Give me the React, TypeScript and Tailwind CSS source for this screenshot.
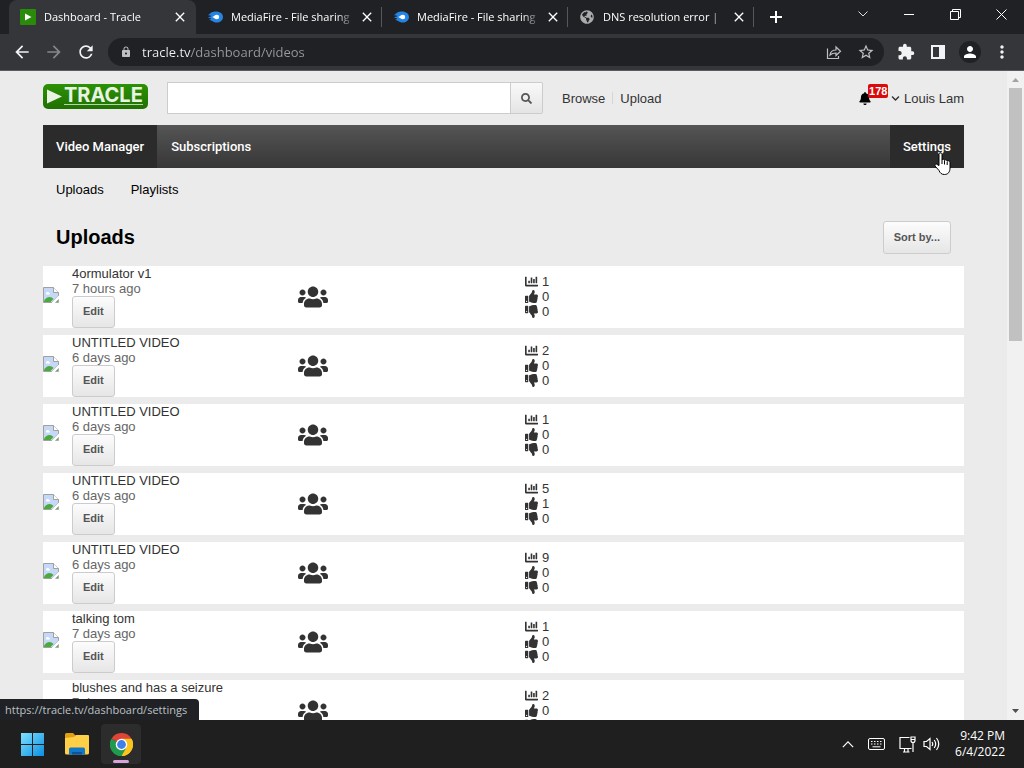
import React from 'react';
import { FaBell, FaChartBar, FaChevronDown, FaGlobeAmericas, FaSearch, FaThumbsDown, FaThumbsUp, FaUsers } from 'react-icons/fa';
import { MdArrowBack, MdArrowForward, MdClose, MdExtension, MdLock, MdMoreVert, MdPerson, MdRefresh, MdStarBorder } from 'react-icons/md';

const videos = [
  { title: '4ormulator v1', age: '7 hours ago', views: 1, likes: 0, dislikes: 0 },
  { title: 'UNTITLED VIDEO', age: '6 days ago', views: 2, likes: 0, dislikes: 0 },
  { title: 'UNTITLED VIDEO', age: '6 days ago', views: 1, likes: 0, dislikes: 0 },
  { title: 'UNTITLED VIDEO', age: '6 days ago', views: 5, likes: 1, dislikes: 0 },
  { title: 'UNTITLED VIDEO', age: '6 days ago', views: 9, likes: 0, dislikes: 0 },
  { title: 'talking tom', age: '7 days ago', views: 1, likes: 0, dislikes: 0 },
  { title: 'blushes and has a seizure', age: '7 days ago', views: 2, likes: 0, dislikes: 0 },
];

const tabs = [
  { title: 'Dashboard - Tracle', icon: 'tracle', active: true },
  { title: 'MediaFire - File sharing', icon: 'mediafire', active: false },
  { title: 'MediaFire - File sharing', icon: 'mediafire', active: false },
  { title: 'DNS resolution error |', icon: 'globe', active: false },
];

function Favicon({ name }: { name: string }) {
  if (name === 'tracle') {
    return (
      <svg viewBox="0 0 16 16" className="h-4 w-4 shrink-0">
        <rect width="16" height="16" rx="1" fill="#2a8a0a" />
        <path d="M5 4.500l6.500 3.500L5 11.500z" fill="#fff" />
      </svg>
    );
  }
  if (name === 'mediafire') {
    return (
      <svg viewBox="0 0 16 16" className="h-4 w-4 shrink-0">
        <path d="M0 6.500C2.500 6 3 3 8 2.500c4.500-.4 8 2 8 5.500s-3 5.500-6.500 5.500C6 13.500 5 11 2 11c1-.4 1.700-.8 2.300-1.400C3 9 1.500 9 .5 9.200 2 8 3.500 7.500 4.500 7 3 6.200 1.500 6.200 0 6.500z" fill="#2485e4" />
        <path d="M5 8c2 .1 2.500-2.200 5-2.200a2.200 2.200 0 0 1 0 4.400C7.700 10.200 7 8.500 5 8z" fill="#fff" />
      </svg>
    );
  }
  return <FaGlobeAmericas className="h-4 w-4 shrink-0 p-px text-[#a9abad]" />;
}

function TabStrip() {
  return (
    <div className="flex h-[34px] items-stretch bg-[#202124] pl-[9px] text-[11px] text-white">
      {tabs.map((tab, i) => (
        <div
          key={i}
          className={
            tab.active
              ? 'flex w-[187px] items-center rounded-t-lg bg-[#35363a] pr-2 pl-[11px]'
              : 'flex w-[186px] items-center pl-[11px]'
          }
        >
          <Favicon name={tab.icon} />
          <span className="ml-2 w-[124px] overflow-hidden mask-r-from-85% whitespace-nowrap">{tab.title}</span>
          <button aria-label="Close tab" className="ml-1 flex h-4 w-4 items-center justify-center">
            <MdClose className="h-4 w-4" />
          </button>
          {!tab.active && <span className="ml-auto h-5 w-px bg-[#55575b]" />}
        </div>
      ))}
      <button aria-label="New tab" className="flex w-11 items-center justify-center">
        <svg viewBox="0 0 12 12" className="h-3 w-3" stroke="#fff" strokeWidth="2">
          <path d="M6 0v12M0 6h12" />
        </svg>
      </button>
      <div className="ml-auto flex h-7">
        <button aria-label="Search tabs" className="flex w-[46px] items-center justify-center">
          <svg viewBox="0 0 10 6" className="h-1.5 w-2.5" fill="none" stroke="#ddd">
            <path d="M.5.5L5 5 9.500.5" />
          </svg>
        </button>
        <button aria-label="Minimize" className="flex w-[46px] items-center justify-center">
          <span className="h-px w-2.5 bg-white" />
        </button>
        <button aria-label="Restore" className="flex w-[46px] items-center justify-center">
          <svg viewBox="0 0 11 11" className="h-[11px] w-[11px]" fill="none" stroke="#fff">
            <path d="M.5 2.500h8v8h-8zM2.500 2.500v-2h8v8h-2" />
          </svg>
        </button>
        <button aria-label="Close" className="flex w-[46px] items-center justify-center">
          <svg viewBox="0 0 11 11" className="h-[11px] w-[11px]" stroke="#fff">
            <path d="M.5.5l10 10M10.500.5l-10 10" />
          </svg>
        </button>
      </div>
    </div>
  );
}

function Toolbar() {
  return (
    <div className="flex h-[37px] items-center border-b border-[#5a5b5e] bg-[#35363a] pr-1.5 pl-1.5 text-[#f1f3f4]">
      <button aria-label="Back" className="flex w-8 justify-center"><MdArrowBack className="h-5 w-5" /></button>
      <button aria-label="Forward" className="flex w-8 justify-center text-[#85878a]"><MdArrowForward className="h-5 w-5" /></button>
      <button aria-label="Reload" className="flex w-8 justify-center"><MdRefresh className="h-5 w-5" /></button>
      <div className="ml-1.5 flex h-7 flex-1 items-center rounded-full bg-[#202124] pr-2 pl-3 text-[#bdc1c6]">
        <MdLock className="h-3 w-3" />
        <input
          type="text"
          aria-label="Address"
          defaultValue="tracle.tv/dashboard/videos"
          className="ml-2.5 min-w-0 flex-1 bg-[linear-gradient(90deg,#f1f3f4_49px,#969ba1_49px)] bg-clip-text pt-px text-[13px] text-transparent outline-none"
        />
        <button aria-label="Share" className="flex w-8 justify-center">
          <svg viewBox="0 0 16 16" className="h-4 w-4" fill="none" stroke="currentColor" strokeWidth="1.200">
            <path d="M1.500 4.500v10h11V12M4 11c.5-3.500 2.500-5 6-5V3l4.500 4.300L10 11.500V9C7.500 9 5.700 9.500 4 11z" />
          </svg>
        </button>
        <button aria-label="Bookmark" className="-mr-1.5 flex w-8 justify-center"><MdStarBorder className="h-[18px] w-[18px]" /></button>
      </div>
      <button aria-label="Extensions" className="ml-1.5 flex w-8 justify-center"><MdExtension className="h-[18px] w-[18px]" /></button>
      <button aria-label="Side panel" className="flex w-8 justify-center">
        <svg viewBox="0 0 14 14" className="h-3.5 w-3.5" fill="currentColor">
          <path d="M0 0h14v14H0zM2 2v10h6V2z" fillRule="evenodd" />
        </svg>
      </button>
      <button aria-label="Profile" className="flex w-8 justify-center">
        <span className="flex h-[22px] w-[22px] items-center justify-center rounded-full bg-[#202124]">
          <MdPerson className="h-[18px] w-[18px] text-white" />
        </span>
      </button>
      <button aria-label="Menu" className="flex w-8 justify-center"><MdMoreVert className="h-5 w-5" /></button>
    </div>
  );
}

function SiteHeader() {
  return (
    <header className="flex items-center pt-[11px] pb-[11px]">
      <a href="#" className="mb-1 flex h-[25px] w-[105px] items-center rounded-[5px] bg-linear-to-b from-[#2c9205] to-[#217003] pl-1">
        <svg viewBox="0 0 15 15" className="h-[15px] w-[15px]" fill="#e8f3e4">
          <path d="M0 .5l15 7-15 7z" />
        </svg>
        <span className="ml-0.5 border-b border-[#b5d6a8] font-['Inter',sans-serif] text-[20px] leading-[17px] font-bold text-[#e8f3e4]">TRACLE</span>
      </a>
      <form className="ml-[19px] flex h-8 w-[376px]">
        <input type="text" aria-label="Search" className="min-w-0 flex-1 border border-[#ccc] bg-white px-2 outline-none" />
        <button
          type="button"
          aria-label="Search videos"
          className="flex w-8 items-center justify-center rounded-r-xs border border-l-0 border-[#ccc] bg-linear-to-b from-[#f9f9f9] to-[#e4e4e4] text-[#555]"
        >
          <FaSearch className="h-[11px] w-[11px]" />
        </button>
      </form>
      <nav className="ml-[19px] flex items-center text-[#333]">
        <a href="#">Browse</a>
        <span className="mx-[7px] h-3 w-px bg-[#d5d5d5]" />
        <a href="#">Upload</a>
      </nav>
      <div className="ml-auto flex items-center text-[#333]">
        <a href="#" aria-label="Notifications" className="relative mr-5">
          <FaBell className="h-[13px] w-3 text-black" />
          <span className="absolute -top-2 left-[9px] rounded-xs bg-[#d90b0b] px-px text-[11px] leading-[14px] font-bold text-white">178</span>
        </a>
        <FaChevronDown className="h-[9px] w-[9px]" />
        <a href="#" className="ml-1">Louis Lam</a>
      </div>
    </header>
  );
}

// Row thumbnail placeholder
function MissingThumb() {
  return (
    <svg viewBox="0 0 16 16" className="mb-1 h-4 w-4" role="img" aria-label="thumbnail">
      <path d="M.5.5h10l5 5V9L9 15.500H.5z" fill="#c5d8f8" stroke="#a0a0a0" />
      <path d="M10.500.5v5h5" fill="#fff" stroke="#a0a0a0" />
      <path d="M3 6.500c0-2 3-2 3-.5 1.500 0 1.500 1.500 0 1.500H3z" fill="#fff" />
      <path d="M1 14c2-4.500 7-5.500 9.500-2L7.500 15H1z" fill="#4caa3c" />
      <path d="M16 8.500l-7.500 7.500h3L16 11.500z" fill="#fff" />
      <path d="M12.500 15.500h3v-3z" fill="#5bae48" stroke="#a0a0a0" strokeWidth=".7" />
    </svg>
  );
}

function VideoRow({ video }: { video: (typeof videos)[number] }) {
  return (
    <li className="grid h-[62px] grid-cols-[29px_226px_227px_1fr] items-center bg-white">
      <MissingThumb />
      <div className="self-start">
        <a href="#" className="block text-[#333]">{video.title}</a>
        <p className="text-[#666]">{video.age}</p>
        <button className="h-8 rounded-[3px] border border-[#ccc] bg-linear-to-b from-[#fcfcfc] to-[#e6e6e6] px-2.5 pb-px text-[11px] font-bold text-[#555]">
          Edit
        </button>
      </div>
      <FaUsers className="h-[30px] w-[30px] text-[#333]" />
      <div className="pb-0.5 text-[#333]">
        <p className="flex items-center gap-1"><FaChartBar className="h-[13px] w-[13px]" />{video.views}</p>
        <p className="flex items-center gap-1"><FaThumbsUp className="h-[13px] w-[13px]" />{video.likes}</p>
        <p className="flex items-center gap-1"><FaThumbsDown className="h-[13px] w-[13px]" />{video.dislikes}</p>
      </div>
    </li>
  );
}

function Page() {
  return (
    <div className="min-w-0 flex-1 overflow-hidden bg-[#ebebeb] px-[43px] font-['Liberation_Sans',Arial,sans-serif] text-[13px] leading-[15px]">
      <SiteHeader />
      <nav className="flex h-[43px] items-stretch bg-linear-to-b from-[#555] to-[#373737] font-['Roboto',sans-serif] font-medium text-white">
        <a href="#" className="flex items-center bg-[#2b2b2b] px-[13px]">Video Manager</a>
        <a href="#" className="flex items-center px-3.5">Subscriptions</a>
        <a href="#" className="relative ml-auto flex items-center bg-[#2b2b2b] px-[13px]">
          Settings
          <svg viewBox="0 0 17 24" className="absolute top-[27px] right-[13px] h-6 w-[17px]" fill="#fff" stroke="#000">
            <path d="M5 13.500V2.500c0-2 3-2 3 0V8c.3-1.300 2.500-1 2.500.5 .5-1.200 2.700-.8 2.700.8 .5-1 2.800-.6 2.800 1V16c0 4-2 6.500-5.500 6.500-3 0-4.500-1.500-5.500-4L1 14c-.7-1.600 1-2.600 2.200-1.500z" />
            <path d="M8 8v4M10.500 9v3.500M13.200 10v3" />
          </svg>
        </a>
      </nav>
      <nav className="flex h-[43px] items-center gap-[27px] px-[13px] text-black">
        <a href="#">Uploads</a>
        <a href="#">Playlists</a>
      </nav>
      <div className="mb-3 flex items-center justify-between px-[13px] pt-2.5">
        <h1 className="pb-0.5 text-xl leading-6 font-bold text-black">Uploads</h1>
        <button className="h-[33px] rounded-[3px] border border-[#ccc] bg-linear-to-b from-[#fcfcfc] to-[#e6e6e6] px-2.5 text-[11px] font-bold text-[#555]">
          Sort by...
        </button>
      </div>
      <ul className="flex flex-col gap-[7px]">
        {videos.map((video, i) => (
          <VideoRow key={i} video={video} />
        ))}
      </ul>
    </div>
  );
}

function Scrollbar() {
  return (
    <div className="flex w-[17px] flex-col items-center bg-[#f1f1f1]">
      <svg viewBox="0 0 17 17" className="h-[17px] w-[17px]" fill="#a3a3a3"><path d="M5 11l3.500-4 3.500 4z" /></svg>
      <div className="h-[253px] w-[13px] bg-[#c1c1c1]" />
      <svg viewBox="0 0 17 17" className="mt-auto h-[17px] w-[17px]" fill="#505050"><path d="M5 6l3.500 4L12 6z" /></svg>
    </div>
  );
}

function Taskbar() {
  return (
    <div className="flex h-12 items-center bg-[#1f1f1f] pr-[19px] pl-3 text-white">
      <button aria-label="Start" className="flex h-10 w-10 items-center justify-center">
        <svg viewBox="0 0 23 23" className="h-[23px] w-[23px]">
          <defs>
            <linearGradient id="win" x1="0" y1="0" x2="1" y2="1">
              <stop offset="0" stopColor="#7fe0ff" />
              <stop offset="1" stopColor="#0a8fe0" />
            </linearGradient>
          </defs>
          <path d="M0 0h11v11H0zM12 0h11v11H12zM0 12h11v11H0zM12 12h11v11H12z" fill="url(#win)" />
        </svg>
      </button>
      <button aria-label="File Explorer" className="ml-[5px] flex h-10 w-10 items-center justify-center">
        <svg viewBox="0 0 24 22" className="h-[22px] w-6">
          <path d="M0 1.500Q0 0 1.500 0H8l3 3v4H0z" fill="#e0a010" />
          <path d="M0 5l9-1 2-2h12q1 0 1 1v17q0 1.500-1.500 1.500h-21Q0 21.500 0 20z" fill="#ffcf48" />
          <path d="M4 21.500v-5.500q0-1.500 1.500-1.500h13q1.500 0 1.500 1.500v5.500z" fill="#1478c8" />
          <path d="M7 21.500v-2.500h10v2.500z" fill="#0a559c" />
        </svg>
      </button>
      <button aria-label="Chrome" className="relative ml-1 flex h-10 w-10 items-center justify-center rounded-sm bg-[#2c2c2c]">
        <svg viewBox="0 0 24 24" className="h-[23px] w-[23px]">
          <path d="M12 12L1.600 6A12 12 0 0 1 22.400 6z" fill="#e04436" />
          <path d="M12 12L22.400 6A12 12 0 0 1 12 24z" fill="#fcc31e" />
          <path d="M12 12v12A12 12 0 0 1 1.600 6z" fill="#229a4c" />
          <path d="M12 6h10.400A12 12 0 0 1 12 24l5.200-9z" fill="#fcc31e" />
          <path d="M1.600 6l5.200 9L12 18l5.200-3L12 24A12 12 0 0 1 1.600 6z" fill="#229a4c" />
          <circle cx="12" cy="12" r="6" fill="#fff" />
          <circle cx="12" cy="12" r="4.600" fill="#3f7fe8" />
        </svg>
        <span className="absolute bottom-px left-3 h-[3px] w-4 rounded-full bg-[#d6a3dc]" />
      </button>
      <div className="ml-auto flex items-center">
        <button aria-label="Show hidden icons" className="mr-3.5">
          <svg viewBox="0 0 14 8" className="h-[7px] w-3" fill="none" stroke="#fff" strokeWidth="1.400"><path d="M1 7l6-6 6 6" /></svg>
        </button>
        <button aria-label="Touch keyboard" className="mr-3.5">
          <svg viewBox="0 0 17 12" className="h-3 w-[17px]" fill="none" stroke="#fff">
            <rect x=".5" y=".5" width="16" height="11" rx="1.500" />
            <path d="M3 3.500h11M3 6h11" strokeDasharray="1.500 1.500" />
            <path d="M4.500 8.800h8" />
          </svg>
        </button>
        <button aria-label="Network" className="mr-[7px]">
          <svg viewBox="0 0 17 17" className="h-[17px] w-[17px]" fill="none" stroke="#fff" strokeWidth="1.200">
            <path d="M10.500 1.500H1v11h11.500M4 16h6.500M5.500 12.500V16M9 12.500V16M14 6.500V16" />
            <path d="M12 1h4v3.500q0 2-2 2t-2-2zM12 3.500h4" />
          </svg>
        </button>
        <button aria-label="Volume" className="mr-[15px]">
          <svg viewBox="0 0 17 14" className="h-3.5 w-[17px]" fill="none" stroke="#fff" strokeWidth="1.200">
            <path d="M1 4.500h2.500L7 1.500v11L3.500 9.500H1zM9 5q1.500 2 0 4M11.200 3q3 4 0 8M13.500 1q4.500 6 0 12" />
          </svg>
        </button>
        <div className="text-right text-xs leading-4">
          <p>9:42 PM</p>
          <p>6/4/2022</p>
        </div>
      </div>
    </div>
  );
}

export default function App() {
  return (
    <div className="flex h-screen flex-col overflow-hidden font-['Open_Sans',sans-serif]">
      <TabStrip />
      <Toolbar />
      <main className="relative flex min-h-0 flex-1">
        <Page />
        <Scrollbar />
        <div className="absolute bottom-0 left-0 rounded-tr-sm bg-[#202124] pr-3 pl-[5px] text-[11px] leading-[21px] text-[#bdc1c6]">
          https://tracle.tv/dashboard/settings
        </div>
      </main>
      <Taskbar />
    </div>
  );
}
